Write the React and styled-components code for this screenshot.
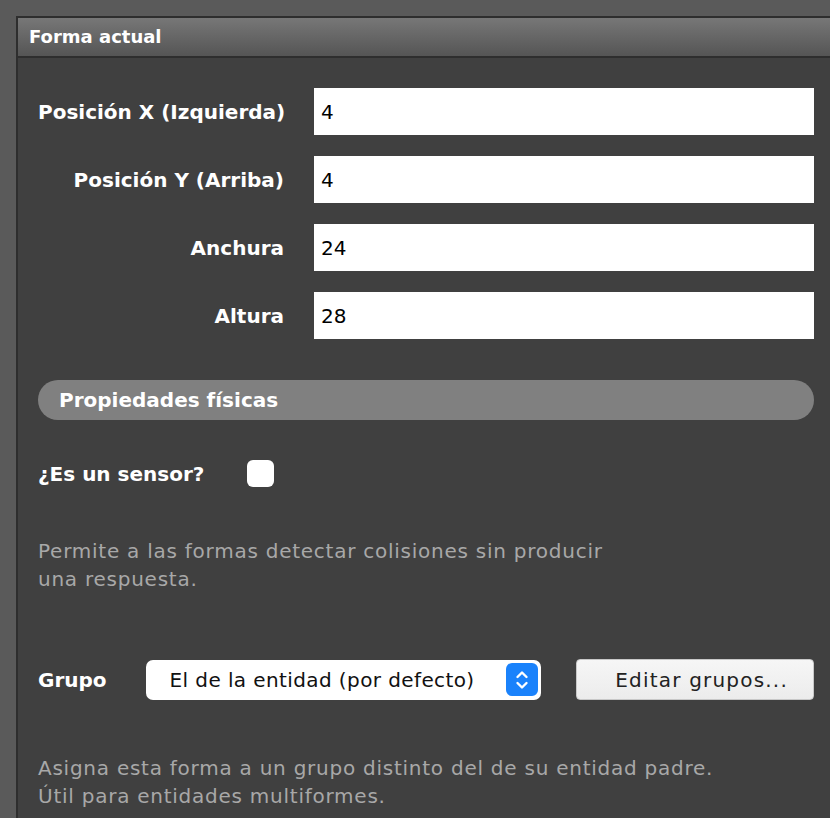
import React, { useState } from 'react'
import styled, { createGlobalStyle } from 'styled-components'

const GlobalStyle = createGlobalStyle`
  html, body {
    margin: 0;
    padding: 0;
    background: #5a5a5a;
    font-family: "DejaVu Sans", "Liberation Sans", sans-serif;
    overflow: hidden;
  }
`

const fields = [
  { label: 'Posición X (Izquierda)', value: '4' },
  { label: 'Posición Y (Arriba)', value: '4' },
  { label: 'Anchura', value: '24' },
  { label: 'Altura', value: '28' },
]

const App = () => {
  const [values, setValues] = useState(fields.map((f) => f.value))
  const [sensor, setSensor] = useState(false)

  return (
    <>
      <GlobalStyle />
      <Page>
        <Panel>
          <PanelHeader>Forma actual</PanelHeader>
          <Body>
            <FieldGrid>
              {fields.map((f, i) => (
                <React.Fragment key={f.label}>
                  <FieldLabel>{f.label}</FieldLabel>
                  <TextInput
                    value={values[i]}
                    onChange={(e) => {
                      const next = [...values]
                      next[i] = e.target.value
                      setValues(next)
                    }}
                  />
                </React.Fragment>
              ))}
            </FieldGrid>

            <SectionPill>Propiedades físicas</SectionPill>

            <SensorRow>
              <RowLabel>¿Es un sensor?</RowLabel>
              <CheckBox checked={sensor} onClick={() => setSensor(!sensor)} />
            </SensorRow>

            <Hint>
              Permite a las formas detectar colisiones sin producir
              <br />
              una respuesta.
            </Hint>

            <GroupRow>
              <RowLabel>Grupo</RowLabel>
              <Select>
                <span>El de la entidad (por defecto)</span>
                <Stepper>
                  <svg width="18" height="26" viewBox="0 0 18 26" fill="none" stroke="#fff" strokeWidth="2.4" strokeLinecap="round" strokeLinejoin="round">
                    <path d="M4.5 10 L9 5.5 L13.5 10" />
                    <path d="M4.5 16 L9 20.5 L13.5 16" />
                  </svg>
                </Stepper>
              </Select>
              <Button>Editar grupos...</Button>
            </GroupRow>

            <Hint $bottom>
              Asigna esta forma a un grupo distinto del de su entidad padre.
              <br />
              Útil para entidades multiformes.
            </Hint>
          </Body>
        </Panel>
      </Page>
    </>
  )
}

export default App

const Page = styled.div`
  width: 830px;
  height: 818px;
  padding: 16px 0 0 16px;
  box-sizing: border-box;
  overflow: hidden;
`

const Panel = styled.div`
  width: 840px;
  height: 830px;
  border: 2px solid #2e2e2e;
  border-right: none;
  background: #404040;
  display: flex;
  flex-direction: column;
`

const PanelHeader = styled.div`
  height: 38px;
  line-height: 38px;
  padding-left: 11px;
  background: linear-gradient(#777777, #555555);
  border-bottom: 2px solid #2e2e2e;
  color: #fff;
  font-weight: bold;
  font-size: 18px;
`

const Body = styled.div`
  padding: 30px 0 0 20px;
  width: 776px;
  display: flex;
  flex-direction: column;
`

const FieldGrid = styled.div`
  display: grid;
  grid-template-columns: 246px 500px;
  column-gap: 30px;
  row-gap: 21px;
  align-items: center;
`

const FieldLabel = styled.label`
  text-align: right;
  color: #fff;
  font-weight: bold;
  font-size: 20px;
  white-space: nowrap;
`

const TextInput = styled.input`
  height: 47px;
  box-sizing: border-box;
  border: none;
  outline: none;
  background: #fff;
  padding: 0 7px;
  font-family: "DejaVu Sans", sans-serif;
  font-size: 20px;
  color: #000;
`

const SectionPill = styled.div`
  margin-top: 41px;
  height: 40px;
  line-height: 40px;
  border-radius: 20px;
  background: #808080;
  color: #fff;
  font-weight: bold;
  font-size: 20px;
  padding-left: 21px;
`

const SensorRow = styled.div`
  margin-top: 40px;
  display: flex;
  align-items: center;
  gap: 43px;
  height: 27px;
`

const RowLabel = styled.span`
  color: #fff;
  font-weight: bold;
  font-size: 20px;
`

const CheckBox = styled.div`
  width: 27px;
  height: 27px;
  border-radius: 6px;
  background: ${(p) => (p.checked ? '#1a82fb' : '#fff')};
  cursor: pointer;
`

const Hint = styled.p`
  margin: ${(p) => (p.$bottom ? '54px 0 0' : '50px 0 0')};
  color: #a8a8a8;
  font-size: 20px;
  letter-spacing: 0.75px;
  line-height: 28px;
  white-space: nowrap;
`

const GroupRow = styled.div`
  margin-top: 66px;
  display: flex;
  align-items: center;
`

const Select = styled.div`
  margin-left: 39px;
  width: 395px;
  height: 40px;
  box-sizing: border-box;
  background: #fff;
  border-radius: 7px;
  display: flex;
  align-items: center;
  justify-content: space-between;
  padding: 0 3px 0 24px;
  font-size: 20px;
  letter-spacing: 0.4px;
  color: #111;
`

const Stepper = styled.div`
  width: 32px;
  height: 33px;
  border-radius: 6px;
  background: #1a82fb;
  display: flex;
  align-items: center;
  justify-content: center;
`

const Button = styled.div`
  margin-left: 35px;
  width: 238px;
  height: 41px;
  box-sizing: border-box;
  padding-left: 14px;
  border-radius: 4px;
  background: linear-gradient(#f6f6f6, #ececec);
  border: 1px solid #c8c8c8;
  display: flex;
  align-items: center;
  justify-content: center;
  font-size: 20px;
  letter-spacing: 1.2px;
  color: #222;
  cursor: pointer;
`
